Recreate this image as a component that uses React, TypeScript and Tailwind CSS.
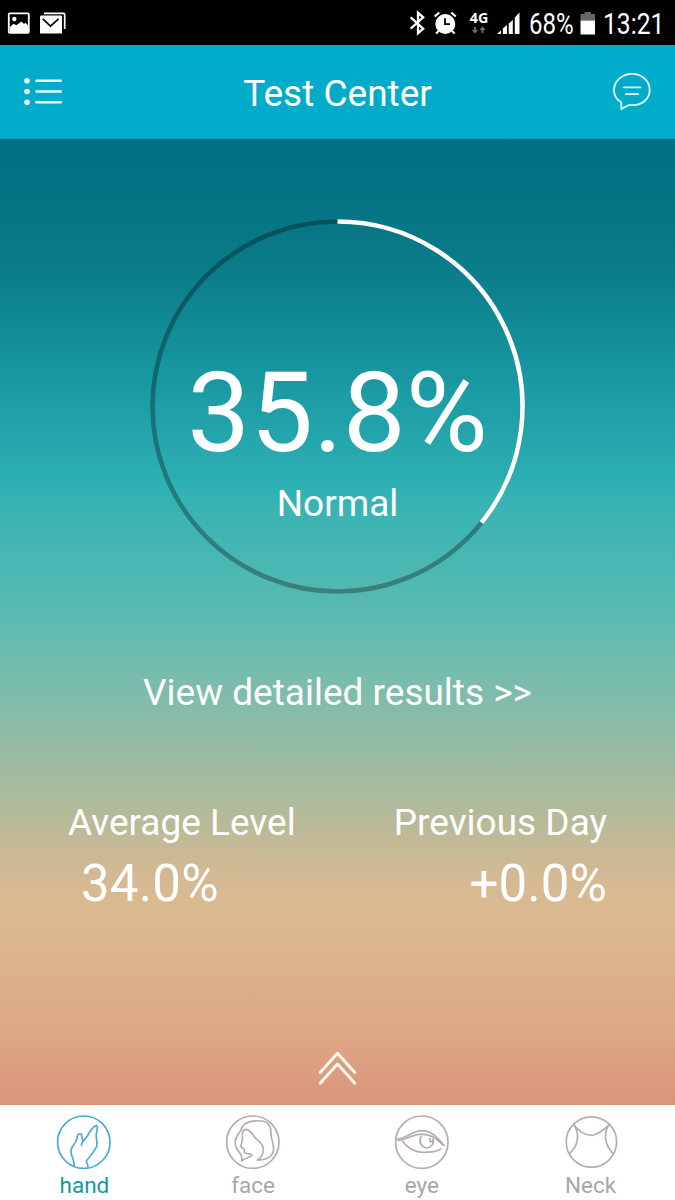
import React from "react";

const SKY =
  "bg-[linear-gradient(to_bottom,#006f84_0px,#047183_50px,#0a7b88_125px,#128c97_193px,#1d9da5_261px,#2cafb3_341px,#38b3b3_366px,#59bab1_471px,#74bcae_527px,#8dbba8_589px,#b4ba99_675px,#d6b993_743px,#dcb98e_781px,#dcb18b_836px,#dda685_898px,#dc9b80_941px,#d9957b_966px)]";

function StatusBar() {
  return (
    <div className="flex h-[45px] items-center justify-between bg-black">
      <svg width="80" height="45" viewBox="0 0 80 45" fill="none">
        <rect x="8.8" y="13.3" width="20" height="19.5" rx="1" stroke="#fff" strokeWidth="1.8" />
        <circle cx="14.3" cy="19" r="2.2" fill="#fff" />
        <path d="M10 27 L13.5 23.7 L16.3 25.2 L21.5 21.5 L24 24 L25.7 22.8 L28 25.5 V32 H10Z" fill="#fff" />
        <path d="M44 13.3 H63.3 Q64.7 13.3 64.7 14.7 V29" stroke="#fff" strokeWidth="1.7" />
        <rect x="40" y="15.6" width="22" height="18" rx="1.2" fill="#fff" />
        <path d="M42.8 18.8 L50.5 26.2 L58.6 18.8" stroke="#000" strokeWidth="1.6" />
      </svg>
      <div className="flex items-center text-white">
        <svg width="128" height="45" viewBox="400 0 128 45" fill="none">
          <path d="M410.7 17.3 L423.2 28.7 L418 33.2 V12.8 L423.2 17.3 L410.7 28.7" stroke="#fff" strokeWidth="2.3" />
          <circle cx="445.3" cy="24" r="10" fill="#fff" />
          <path d="M434.7 16.5 L439.2 12.7 M455.8 16.5 L451.3 12.7 M438.7 31 L436 33.5 M452 31 L454.7 33.5" stroke="#fff" strokeWidth="2.2" />
          <path d="M445 18.3 V24.2 H450" stroke="#000" strokeWidth="1.8" />
          <text x="469.8" y="23.2" fill="#fff" className="font-['Open_Sans',sans-serif] text-[14px] font-bold" textLength="18.5" lengthAdjust="spacingAndGlyphs">4G</text>
          <path d="M475 27 V31 M482.5 29 V33" stroke="#686868" strokeWidth="2.1" />
          <path d="M471.8 30 H478.2 L475 33.7Z M479.3 30 H485.7 L482.5 26.3Z" fill="#686868" />
          <path d="M497 34 L501 30.2 V34Z M502.8 28.5 L507 25 V34 H502.8Z M508.7 23.5 L512.8 20 V34 H508.7Z M514.8 17.5 L519.5 12.5 V34 H514.8Z" fill="#fff" />
        </svg>
        <span className="w-[52px] whitespace-nowrap font-[Roboto,sans-serif] text-[29px] leading-[45px]">
          <span className="inline-block origin-left translate-x-px translate-y-[2px] scale-x-[0.83]">68%</span>
        </span>
        <svg width="16" height="45" viewBox="0 0 16 45">
          <path d="M0.5 14 H4.5 V12 H11 V14 H15 V20.5 H0.5Z" fill="#666" />
          <rect x="0.5" y="20.5" width="14.5" height="14" fill="#fff" />
        </svg>
        <span className="ml-[7px] w-[72px] whitespace-nowrap font-[Roboto,sans-serif] text-[29px] leading-[45px]">
          <span className="inline-block origin-left translate-y-[2px] scale-x-[0.85]">13:21</span>
        </span>
      </div>
    </div>
  );
}

function Header() {
  return (
    <header className="flex h-[94px] items-center justify-between border-b border-[#1599b0] bg-[#02abc9] px-[22px]">
      <svg width="42" height="40" viewBox="22 72 42 40" stroke="#e9ffff" strokeLinecap="round">
        <path d="M36.5 80.7 H60.7 M36.5 91.5 H60.7 M36.5 102.3 H60.7" strokeWidth="2.6" />
        <path d="M27 80.7 h0.01 M27 91.5 h0.01 M27 102.3 h0.01" strokeWidth="5.6" />
      </svg>
      <h1 className="pt-[4px] text-[37px] leading-none">Test Center</h1>
      <svg width="42" height="40" viewBox="611 72 42 40" fill="none" stroke="#e0fcff" strokeWidth="1.8" strokeLinecap="round" strokeLinejoin="round">
        <path d="M621.3 109 V102.2 C616.5 99.5 614 95 614 90.2 C614 81 622 73.8 632 73.8 C642 73.8 649.7 81 649.7 90 C649.7 99 642 105.2 632.5 105.2 H628.5 Z" />
        <path d="M623.5 87.3 H640.5 M625.8 94.2 H638.3" />
      </svg>
    </header>
  );
}

function Gauge({ value }: { value: number }) {
  const angle = (value / 100) * 2 * Math.PI;
  const endX = 187.5 + 185 * Math.sin(angle);
  const endY = 187.5 - 185 * Math.cos(angle);
  return (
    <div className="mx-auto mt-[80px] grid h-[375px] w-[375px] place-items-center">
      <svg className="col-start-1 row-start-1" width="375" height="375" viewBox="0 0 375 375" fill="none" strokeWidth="4.6">
        <circle cx="187.5" cy="187.5" r="185" stroke="#000" strokeOpacity="0.3" />
        <path d={`M187.5 2.5 A185 185 0 ${value > 50 ? 1 : 0} 1 ${endX} ${endY}`} stroke="#fff" />
      </svg>
      <div className="col-start-1 row-start-1 flex flex-col items-center pt-[70px]">
        <div className="text-[112px] leading-[112px]">{value}%</div>
        <div className="mt-[13px] text-[37px] leading-[44px]">Normal</div>
      </div>
    </div>
  );
}

function TabIcon({ name }: { name: string }) {
  return (
    <svg width="56" height="56" viewBox="0 0 56 56" fill="none" stroke="currentColor" strokeWidth="1.7" strokeLinecap="round" strokeLinejoin="round">
      {name === "neck" ? <circle cx="28.4" cy="28" r="25.2" /> : <circle cx="27.8" cy="28.2" r="26.2" />}
      {name === "hand" && (
        <path d="M18 52.7 C19 47 14.9 42 14.9 37 C15 32 20.4 29.5 21 24.5 C21.2 18.6 25.8 18.6 25.8 22.2 C26 24.5 27 26 26.8 27.3 L25.4 31 L27 27.2 C29.5 25.5 32 20.5 34.6 16.8 C36.5 14.3 38.5 11.4 40.5 11.7 C42.6 12.6 40.4 17.6 40.2 21 C40.2 24.5 41.7 29.5 40.6 32.5 C38 38.5 33.5 42.5 30.5 46.7 C29.6 48.6 32.6 49.6 31.8 52.8" />
      )}
      {name === "face" && (
        <path d="M16.6 47 C17.2 43.5 17 42.5 15.8 40.5 C13.5 37 10.2 34.5 10.2 29 C10.2 23.5 13 20.5 15.6 16.7 C17 12.5 18.2 10.8 20.5 9.5 C23.5 7.6 26.5 6.8 30 6.8 C35 6.6 39 6.6 42 8.8 C45.5 11.8 46 15 46 18.5 C45.8 25 48.6 29 48.6 34.5 C48.4 42.5 42 46.4 32.2 46 C36.5 43.8 38.4 40 38.4 35.5 C38.2 29.5 33.5 27.3 30 23.7 C27.8 20.5 25 15.3 21 15.3 C16.8 15.8 17.2 20 17.4 24.3 C17.6 28.5 15.2 31 16.2 33 L19.4 35.5 C19 37.5 19 38.8 20.6 39.3 C23.5 40.2 26.8 39.5 26.9 41.4 C26 43.6 21.5 42.6 16.6 47Z" />
      )}
      {name === "eye" && (
        <>
          <path d="M2.6 25 C12 25.2 17.5 16.8 27.8 16.6 C38.5 16.8 44 24.8 50.2 31.5" />
          <path d="M4 26.3 C13 26 17 20.8 26 20.2 C37.5 19.8 43 25.5 48.8 30.8 M7.8 26.3 C12 32.8 20 38.4 29.8 38.4 C37 38.4 42.5 37.5 46.8 35" />
          <path d="M27 22.2 C24.6 28 27.2 33.8 32.6 33.8 C37.5 33.8 40.6 29.5 39 25.2 C38.8 28.6 34.8 28.2 36 24.8" />
        </>
      )}
      {name === "neck" && (
        <>
          <path d="M10.7 10.4 C16 17.6 21.5 20.8 28.4 21.3 C35 20.8 41.5 15.5 46.7 10.4" />
          <path d="M11.6 11.6 C16.5 20.5 15.5 31.5 6.7 39.3 M45.4 11.6 C40.2 20.5 42 31.5 50 39.3" />
        </>
      )}
    </svg>
  );
}

const TABS = [
  { id: "hand", label: "hand", tint: "text-[#49abd9]", ink: "text-[#16979f]" },
  { id: "face", label: "face", tint: "text-[#b8adad]", ink: "text-[#ada5a5]" },
  { id: "eye", label: "eye", tint: "text-[#b8adad]", ink: "text-[#ada5a5]" },
  { id: "neck", label: "Neck", tint: "text-[#b8adad]", ink: "text-[#ada5a5]" },
];

export default function App() {
  return (
    <div className="flex h-[1200px] w-[675px] flex-col overflow-hidden font-[Roboto,sans-serif] text-white">
      <StatusBar />
      <Header />
      <main className={`flex h-[966px] flex-col ${SKY}`}>
        <Gauge value={35.8} />
        <div className="mt-[77px] text-center text-[37px] leading-[44px]">View detailed results &gt;&gt;</div>
        <div className="mt-[86px] flex justify-between px-[68px]">
          <div>
            <div className="text-[37px] leading-[44px]">Average Level</div>
            <div className="mt-[9px] pl-[13px] text-[51px] leading-[60px] tracking-[0.2px]">34.0%</div>
          </div>
          <div className="text-right">
            <div className="text-[37px] leading-[44px]">Previous Day</div>
            <div className="mt-[9px] text-[51px] leading-[60px] tracking-[0.1px]">+0.0%</div>
          </div>
        </div>
        <svg className="ml-[315px] mt-[135px]" width="44" height="40" viewBox="0 0 44 40" fill="none" stroke="#fff8ee" strokeWidth="2.9" strokeLinecap="round" strokeLinejoin="round">
          <path d="M5.2 23.5 L22.5 4.2 L39.8 23.5 M5.2 34.2 L22.5 15 L39.8 34.2" />
        </svg>
      </main>
      <nav className="grid h-[95px] grid-cols-4 bg-white pt-[9px]">
        {TABS.map((t) => (
          <div key={t.id} className="flex flex-col items-center">
            <span className={t.tint}>
              <TabIcon name={t.id} />
            </span>
            <span className={`text-[22.5px] leading-[30px] ${t.ink}`}>{t.label}</span>
          </div>
        ))}
      </nav>
    </div>
  );
}
